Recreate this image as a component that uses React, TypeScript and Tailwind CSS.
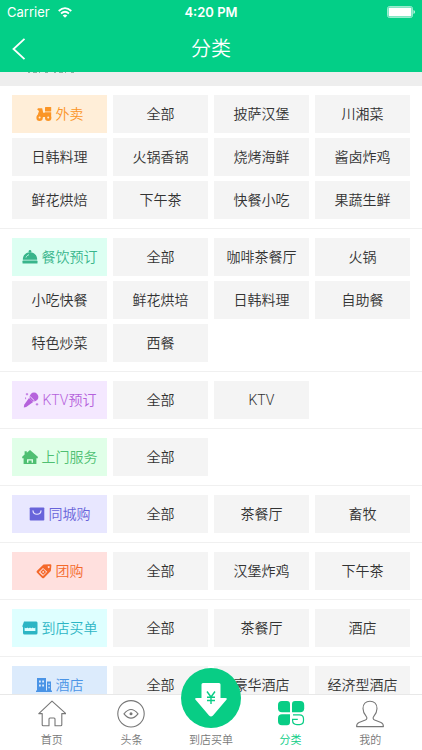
import type { ReactNode } from 'react';

interface Category {
  name: string;
  icon: ReactNode;
  tone: string;
  items: string[];
}

interface TabItem {
  label: string;
  icon: ReactNode;
  active?: boolean;
}

const ScooterIcon = () => (
  <svg viewBox="0 0 16 16" className="size-4 shrink-0" fill="currentColor" aria-hidden="true">
    <path d="M1.200 3.400 2 2.200h4.200l1 4.600h1.600V6.200h6.400v3.600l-2 1.200H7.500L5 12 1.500 9.500 3 5z" />
    <rect x="9" y="1" width="6.200" height="4.600" rx=".5" />
    <circle cx="3.600" cy="11.800" r="3.200" />
    <circle cx="12.200" cy="11.800" r="3.200" />
    <circle cx="3.600" cy="11.600" r="1" fill="#ffedd5" />
    <circle cx="12.200" cy="11.600" r="1" fill="#ffedd5" />
  </svg>
);

const ClocheIcon = () => (
  <svg viewBox="0 0 16 16" className="size-4 shrink-0" fill="currentColor" aria-hidden="true">
    <circle cx="8" cy="2.300" r="1.300" />
    <path d="M.8 10.800C.8 6 4 3.200 8 3.200s7.200 2.800 7.200 7.600z" />
    <rect x=".5" y="11.600" width="15" height="3" rx=".6" />
    <path d="M4 8.500c.5-1.500 1.500-2.400 3-2.800" fill="none" stroke="#dcfff2" strokeWidth=".8" />
  </svg>
);

const MicIcon = () => (
  <svg viewBox="0 0 16 16" className="size-4 shrink-0" fill="currentColor" aria-hidden="true">
    <circle cx="11" cy="5" r="4.400" />
    <path d="M6 6 10.200 10 3.200 15 .8 15.400l.4-2.600z" />
    <path d="M7.200 4.600 11.500 8.900" stroke="#f3e6ff" strokeWidth=".9" />
    <path d="M4 1v2.400M2.800 2.200h2.400M2.600 5.400v1.800M14 11v2.600M12.700 12.300h2.600" stroke="currentColor" strokeWidth=".8" />
  </svg>
);

const HouseIcon = () => (
  <svg viewBox="0 0 16 16" className="size-4 shrink-0" fill="currentColor" aria-hidden="true">
    <path d="M8 1 15.800 7.800v1.400H14.400V15H11V10.200H5V15H1.600V9.200H.2V7.800L2.600 5.600V2.200h2.200v1.600z" />
    <path d="M4.800 15v-1.200h6.400V15zM6.400 13.800v-2.200h3.200v2.200z" />
  </svg>
);

const BagIcon = () => (
  <svg viewBox="0 0 16 16" className="size-4 shrink-0" fill="currentColor" aria-hidden="true">
    <rect x=".7" y="1.500" width="14.600" height="13" rx=".8" />
    <path d="M4 4.800c.3 4.600 7.700 4.600 8 0" fill="none" stroke="#e9e7ff" strokeWidth="1.200" strokeLinecap="round" />
  </svg>
);

const TagIcon = () => (
  <svg viewBox="0 0 16 16" className="size-4 shrink-0" fill="currentColor" aria-hidden="true">
    <path
      fillRule="evenodd"
      d="M7.500 1.600 14.200 1.200q1.200 0 1.200 1.200L14.800 8 8 15q-.9.700-1.800-.1L.8 9.600q-.7-.9.200-1.800zM12.700 3a1 1 0 1 0 .01 0zM7 4.900 3.200 8.700q-.3.400 0 .8l3.300 3.200q.4.300.8 0L11.200 8.800z"
    />
    <path d="M7.200 6 10.100 8.900 7.200 11.800 4.300 8.900z" />
    <circle cx="7.200" cy="8.900" r=".9" fill="#ffe0dd" />
  </svg>
);

const ShopIcon = () => (
  <svg viewBox="0 0 16 16" className="size-4 shrink-0" fill="currentColor" aria-hidden="true">
    <path
      fillRule="evenodd"
      d="M2 1.500h12.500l1 1V13q0 1.500-1.500 1.500H2.500Q1 14.500 1 13V7.500L.3 6.200zM2.600 7.600v3.400h10.800V7.600q-1.400 1.400-2.700 0-1.400 1.400-2.700 0-1.400 1.400-2.700 0-1.300 1.400-2.700 0z"
    />
  </svg>
);

const HotelIcon = () => (
  <svg viewBox="0 0 16 16" className="size-4 shrink-0" fill="currentColor" aria-hidden="true">
    <path
      fillRule="evenodd"
      d="M1 1h9v12.500h1V4.500h4v9h1V15H0v-1.500h1zM3 3.500v2h1.800v-2zM6.200 3.500v2H8v-2zM3 7.500v2h1.800v-2zM6.200 7.500v2H8v-2zM12.400 6.500V8h1.300V6.500zM12.400 9.800v1.500h1.300V9.800z"
    />
  </svg>
);

const categories: Category[] = [
  {
    name: '外卖',
    icon: <ScooterIcon />,
    tone: 'bg-[#ffeed8] text-[#fb9526]',
    items: ['全部', '披萨汉堡', '川湘菜', '日韩料理', '火锅香锅', '烧烤海鲜', '酱卤炸鸡', '鲜花烘焙', '下午茶', '快餐小吃', '果蔬生鲜'],
  },
  {
    name: '餐饮预订',
    icon: <ClocheIcon />,
    tone: 'bg-[#dcfff2] text-[#38b58b]',
    items: ['全部', '咖啡茶餐厅', '火锅', '小吃快餐', '鲜花烘培', '日韩料理', '自助餐', '特色炒菜', '西餐'],
  },
  {
    name: 'KTV预订',
    icon: <MicIcon />,
    tone: 'bg-[#f4e8ff] text-[#b562dc]',
    items: ['全部', 'KTV'],
  },
  {
    name: '上门服务',
    icon: <HouseIcon />,
    tone: 'bg-[#e0ffe8] text-[#4fbf72]',
    items: ['全部'],
  },
  {
    name: '同城购',
    icon: <BagIcon />,
    tone: 'bg-[#e8e7ff] text-[#6864da]',
    items: ['全部', '茶餐厅', '畜牧'],
  },
  {
    name: '团购',
    icon: <TagIcon />,
    tone: 'bg-[#ffe0de] text-[#f4692b]',
    items: ['全部', '汉堡炸鸡', '下午茶'],
  },
  {
    name: '到店买单',
    icon: <ShopIcon />,
    tone: 'bg-[#deffff] text-[#2cb5c4]',
    items: ['全部', '茶餐厅', '酒店'],
  },
  {
    name: '酒店',
    icon: <HotelIcon />,
    tone: 'bg-[#dcebfc] text-[#4a94e6]',
    items: ['全部', '豪华酒店', '经济型酒店'],
  },
];

const HomeTabIcon = () => (
  <svg viewBox="0 0 28 28" className="size-7" fill="none" stroke="currentColor" strokeWidth="1.100" strokeLinejoin="round" aria-hidden="true">
    <path d="M14 1.200.8 13.600h3.400v11.200q0 1 1 1h5.800v-6.800q0-1 1-1h4q1 0 1 1v6.800h5.800q1 0 1-1V13.600h4.100z" />
  </svg>
);

const EyeTabIcon = () => (
  <svg viewBox="0 0 28 28" className="size-7" fill="none" stroke="currentColor" strokeWidth="1.100" aria-hidden="true">
    <circle cx="14" cy="13.800" r="13.200" />
    <path d="M7 13.800q7-8.600 14 0-7 8.600-14 0z" />
    <circle cx="14" cy="13.800" r="1.500" fill="currentColor" stroke="none" />
  </svg>
);

const PayTabIcon = () => (
  <svg viewBox="0 0 60 60" className="size-[60px] shrink-0" aria-hidden="true">
    <circle cx="30" cy="30" r="30" fill="#08cd85" />
    <path
      d="M22 15h16q1.500 0 1.500 1.500V30h4.800q2.600 0 .9 2.100L32 47.400q-2 2-4 0L14.800 32.100Q13 30 15.700 30h4.800V16.500Q20.500 15 22 15z"
      fill="#fff"
    />
    <path d="M26 23.500l4 5.500 4-5.500M30 29v7M26 29.300h8M26 32.500h8" fill="none" stroke="#08cd85" strokeWidth="1.400" />
  </svg>
);

const GridTabIcon = () => (
  <svg viewBox="0 0 28 28" className="size-7" fill="currentColor" aria-hidden="true">
    <path d="M5 1h5q3 0 3 3v8.200H5q-4 0-4-4V5q0-4 4-4z" />
    <path d="M18 1h5.200q4 0 4 4v3.200q0 4-4 4H15V4q0-3 3-3z" />
    <path d="M5 14.200h8V22q0 3.200-3 3.200H5q-4 0-4-4v-3q0-4 4-4z" />
    <path d="M16 14.800h6.500q4 0 4 4v1.800q0 4-4 4H20q-4.400 0-4.400-4v-1.200h5.200" fill="none" stroke="currentColor" strokeWidth="1.200" />
  </svg>
);

const UserTabIcon = () => (
  <svg viewBox="0 0 28 28" className="size-7" fill="none" stroke="currentColor" strokeWidth="1.100" strokeLinejoin="round" aria-hidden="true">
    <path d="M14 1.200c-4.200 0-7 3-7 7.300 0 3.500 1.300 5.700 3.200 7.800 1.100 1.300.9 3-.8 3.700L3 22.400Q.6 23.400.6 26.600h26.800q0-3.200-2.400-4.200L18.600 20c-1.700-.7-1.900-2.400-.8-3.700C19.700 14.200 21 12 21 8.500c0-4.300-2.800-7.300-7-7.300z" />
  </svg>
);

const tabs: TabItem[] = [
  { label: '首页', icon: <HomeTabIcon /> },
  { label: '头条', icon: <EyeTabIcon /> },
  { label: '到店买单', icon: <PayTabIcon /> },
  { label: '分类', icon: <GridTabIcon />, active: true },
  { label: '我的', icon: <UserTabIcon /> },
];

const StatusBar = () => (
  <div className="grid h-6 grid-cols-3 items-center px-[7px] font-['Inter','Liberation_Sans',sans-serif] text-[13px] font-normal">
    <div className="flex items-center gap-2">
      <span>Carrier</span>
      <svg viewBox="0 0 14 11" className="h-[11px] w-[14px]" fill="none" stroke="currentColor" strokeWidth="1.700" aria-hidden="true">
        <path d="M.7 4Q7-1.800 13.300 4M3 6.500q4-3.500 8 0" />
        <path d="M7 10.800 4.700 8.400q2.300-1.700 4.600 0z" fill="currentColor" stroke="none" />
      </svg>
    </div>
    <span className="text-center font-semibold">4:20 PM</span>
    <svg viewBox="0 0 28 12" className="h-3 w-7 justify-self-end" aria-label="电量" role="img">
      <rect x=".5" y=".5" width="25" height="11" rx="2" fill="none" stroke="#fff" strokeOpacity=".6" />
      <rect x="1.500" y="1.500" width="23" height="9" rx="1" fill="#fff" />
      <path d="M26.500 4q1.500.5 1.500 2t-1.500 2z" fill="#fff" fillOpacity=".8" />
    </svg>
  </div>
);

const CategorySection = ({ category }: { category: Category }) => (
  <section className="grid grid-cols-4 gap-x-[6px] gap-y-[5px] border-b border-[#f0f0f0] px-3 py-[9px]">
    <h2 className={`flex h-[38px] items-center justify-center gap-1 ${category.tone}`}>
      {category.icon}
      <span className="whitespace-nowrap">{category.name}</span>
    </h2>
    {category.items.map((item) => (
      <button key={item} type="button" className="h-[38px] whitespace-nowrap bg-[#f4f4f4] text-[#333333]">
        {item}
      </button>
    ))}
  </section>
);

// The pay icon is taller than the bar and grows out over the list
const TabBar = () => (
  <nav className="relative grid h-14 shrink-0 grid-cols-5 grid-rows-1 border-t border-[#e8e8e8] bg-white px-3">
    {tabs.map((tab) => (
      <a
        key={tab.label}
        href="#"
        className={`flex min-h-0 flex-col items-center justify-end gap-[5px] pb-px text-[11px] leading-4 ${
          tab.active ? 'text-[#08cd85]' : 'text-[#777777]'
        }`}
      >
        {tab.icon}
        <span className="whitespace-nowrap">{tab.label}</span>
      </a>
    ))}
  </nav>
);

export default function App() {
  return (
    <div className="flex h-screen flex-col overflow-hidden bg-white font-['Roboto','Noto_Sans_CJK_SC',sans-serif] text-sm font-[350]">
      <header className="shrink-0 bg-[#03cf87] text-white">
        <StatusBar />
        <div className="grid h-12 grid-cols-[48px_1fr_48px] items-center pt-[2px]">
          <button type="button" aria-label="返回" className="pl-3">
            <svg viewBox="0 0 14 22" className="h-[22px] w-[14px]" fill="none" stroke="currentColor" strokeWidth="1.800" aria-hidden="true">
              <path d="M12.500.8 1.500 11l11 10.200" />
            </svg>
          </button>
          <h1 className="text-center text-xl">分类</h1>
        </div>
      </header>
      <main className="min-h-0 flex-1 overflow-hidden">
        <div className="h-[14px] bg-[#eeeeee] px-7">
          <svg viewBox="0 0 48 1" className="h-px w-12" fill="none" stroke="#8fb3a5" aria-hidden="true">
            <path d="M0 .5h48" strokeDasharray="2 3 4 2 1 5 3 6" />
          </svg>
        </div>
        {categories.map((category) => (
          <CategorySection key={category.name} category={category} />
        ))}
      </main>
      <TabBar />
    </div>
  );
}
